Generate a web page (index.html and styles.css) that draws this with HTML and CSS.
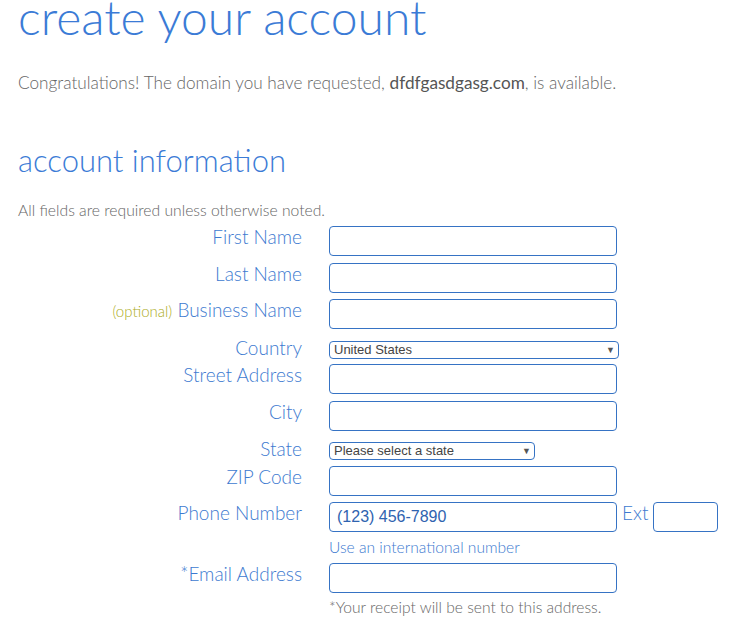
FILE: index.html
```html
<!DOCTYPE html>
<html lang="en">
<head>
    <meta charset="UTF-8">
    <title>create your account</title>
    <link rel="stylesheet" href="styles.css">
</head>
<body>
<div id="main">
    <h1 class="title">create your account</h1>
    <p class="congrats">Congratulations! The domain you have requested, <b>dfdfgasdgasg.com</b>, is available.</p>

    <h2 class="sub-title">account information</h2>
    <p class="note">All fields are required unless otherwise noted.</p>

    <form class="account-form">
        <div class="row">
            <label class="row-label">First Name</label>
            <input type="text" class="txt">
        </div>
        <div class="row">
            <label class="row-label">Last Name</label>
            <input type="text" class="txt">
        </div>
        <div class="row row-tight">
            <label class="row-label"><span class="optional">(optional)</span> Business Name</label>
            <input type="text" class="txt">
        </div>
        <div class="row row-select">
            <label class="row-label">Country</label>
            <div class="sel sel-country">United States</div>
        </div>
        <div class="row row-after-select">
            <label class="row-label">Street Address</label>
            <input type="text" class="txt">
        </div>
        <div class="row">
            <label class="row-label">City</label>
            <input type="text" class="txt">
        </div>
        <div class="row row-select row-state">
            <label class="row-label">State</label>
            <div class="sel sel-state">Please select a state</div>
        </div>
        <div class="row row-tight">
            <label class="row-label">ZIP Code</label>
            <input type="text" class="txt">
        </div>
        <div class="row row-tight">
            <label class="row-label">Phone Number</label>
            <div class="field">
                <div class="phone-line">
                    <input type="text" class="txt phone" value="(123) 456-7890">
                    <label class="ext-label">Ext</label>
                    <input type="text" class="txt ext">
                </div>
                <span class="help">Use an international number</span>
            </div>
        </div>
        <div class="row">
            <label class="row-label">*Email Address</label>
            <div class="field">
                <input type="text" class="txt">
                <p class="receipt">*Your receipt will be sent to this address.</p>
            </div>
        </div>
    </form>
</div>
</body>
</html>
```

FILE: styles.css
```css
*{
    padding: 0;
    margin: 0;
    box-sizing: border-box;
}
body{
    font-family: Lato, "Open Sans", sans-serif;
    font-weight: 300;
    background-color: #fff;
}
#main{
    padding: 0 18px;
    width: 746px;
}
#main .title{
    font-size: 48px;
    font-weight: 300;
    line-height: 48px;
    color: #3b7bd6;
    margin-top: -7px;
}
#main .congrats{
    font-size: 17.2px;
    color: #666;
    line-height: 20px;
    margin-top: 32px;
}
#main .congrats b{
    font-weight: 400;
    color: #555;
}
#main .sub-title{
    font-size: 31px;
    font-weight: 300;
    line-height: 40px;
    color: #3b7bd6;
    margin-top: 47px;
}
#main .note{
    font-size: 15.7px;
    color: #666;
    line-height: 18px;
    margin-top: 21px;
}
.account-form .row{
    display: flex;
    align-items: flex-start;
    margin-top: 7px;
}
.account-form .row-tight{
    margin-top: 6px;
}
.account-form .row-select{
    margin-top: 8px;
}
.account-form .row-state{
    margin-top: 7px;
}
.account-form .row-after-select{
    margin-top: 5px;
}
.account-form .row-label{
    width: 284px;
    margin-right: 27px;
    padding-top: 1px;
    text-align: right;
    font-size: 19px;
    line-height: 20px;
    color: #3d7ad0;
}
.account-form .optional{
    font-size: 15px;
    color: #acac1c;
}
.account-form .txt{
    width: 288px;
    height: 30px;
    border: 1px solid #3673c4;
    border-radius: 4px;
    padding: 0 7px;
    font-family: "Liberation Sans", Arial, sans-serif;
    font-size: 16px;
    color: #2f63b0;
    outline: none;
}
.account-form .sel{
    position: relative;
    height: 18px;
    margin-top: 4px;
    border: 1px solid #3673c4;
    border-radius: 4px;
    padding: 0 4px;
    font-family: "Liberation Sans", Arial, sans-serif;
    font-size: 13px;
    line-height: 16px;
    color: #444;
}
.account-form .sel::after{
    content: "\25BC";
    position: absolute;
    right: 3px;
    top: 0;
    font-size: 9px;
    color: #555;
}
.account-form .sel-country{
    width: 290px;
}
.account-form .sel-state{
    width: 206px;
}
.account-form .phone-line{
    display: flex;
    align-items: flex-start;
}
.account-form .ext-label{
    font-size: 19px;
    line-height: 20px;
    padding-top: 1px;
    color: #3d7ad0;
    margin: 0 5px 0 5px;
}
.account-form .ext{
    width: 65px;
}
.account-form .help{
    display: block;
    font-size: 15.6px;
    line-height: 18px;
    color: #3d7ad0;
    margin-top: 6px;
}
.account-form .receipt{
    font-size: 15.6px;
    line-height: 18px;
    color: #666;
    margin-top: 5px;
}
```
